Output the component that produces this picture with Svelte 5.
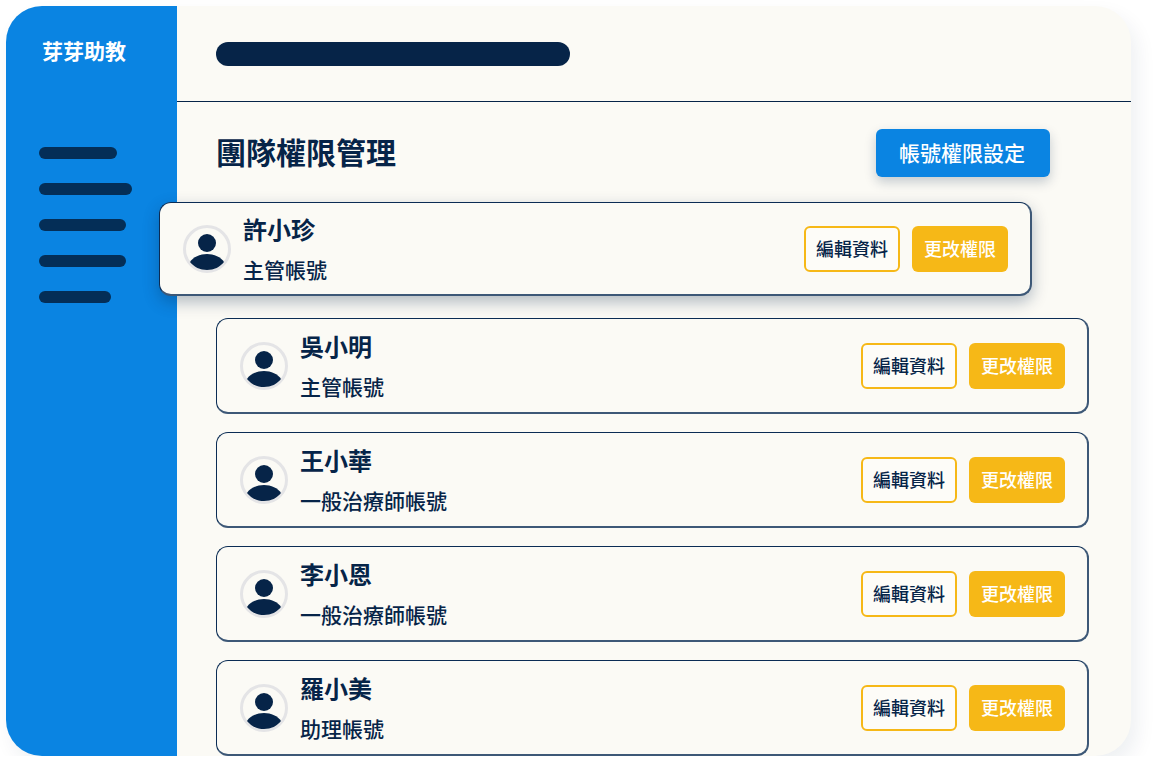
<script>
  const menuWidths = [78, 93, 87, 87, 72];

  const members = [
    { name: "許小珍", role: "主管帳號", featured: true },
    { name: "吳小明", role: "主管帳號" },
    { name: "王小華", role: "一般治療師帳號" },
    { name: "李小恩", role: "一般治療師帳號" },
    { name: "羅小美", role: "助理帳號" },
  ];
</script>

<div class="window">
  <aside class="sidebar">
    <div class="logo">芽芽助教</div>
    <nav class="menu">
      {#each menuWidths as w}
        <span class="menu-line" style="width: {w}px"></span>
      {/each}
    </nav>
  </aside>

  <main class="main">
    <header class="topbar">
      <span class="search-pill"></span>
    </header>

    <section class="content">
      <div class="title-row">
        <h1>團隊權限管理</h1>
        <button class="settings">帳號權限設定</button>
      </div>

      <div class="list">
        {#each members as m}
          <div class="card" class:featured={m.featured}>
            <svg class="avatar" viewBox="0 0 48 48" width="48" height="48" aria-hidden="true">
              <circle cx="24" cy="24" r="22.5" fill="#fbfaf5" stroke="#e4e4e6" stroke-width="3" />
              <circle cx="24" cy="18" r="9" fill="#062448" />
              <path d="M7 37C10 32 17 29 24 29C31 29 38 32 41 37C37 42 31 45 24 45C17 45 11 42 7 37Z" fill="#062448" />
            </svg>
            <div class="info">
              <div class="name">{m.name}</div>
              <div class="role">{m.role}</div>
            </div>
            <div class="actions">
              <button class="edit">編輯資料</button>
              <button class="change">更改權限</button>
            </div>
          </div>
        {/each}
      </div>
    </section>
  </main>
</div>

<style>
  :global(body) {
    background: #fff;
    font-family: "Noto Sans CJK TC", "Noto Sans", sans-serif;
    color: #062448;
  }
  .window {
    width: 1125px;
    height: 750px;
    margin: 6px 0 0 6px;
    display: flex;
    background: #fbfaf5;
    border-radius: 36px;
    box-shadow: 6px 10px 20px rgba(6, 36, 72, 0.07);
  }
  .sidebar {
    flex: 0 0 171px;
    background: #0a84e2;
    border-radius: 36px 0 0 36px;
    box-sizing: border-box;
    padding: 29px 0 0 36px;
  }
  .logo {
    color: #fff;
    font-size: 21px;
    font-weight: 700;
    line-height: 30px;
  }
  .menu {
    display: flex;
    flex-direction: column;
    gap: 24px;
    margin: 82px 0 0 -3px;
  }
  .menu-line {
    display: block;
    height: 12px;
    border-radius: 6px;
    background: #042e57;
  }
  .main {
    flex: 1;
    min-width: 0;
  }
  .topbar {
    height: 96px;
    box-sizing: border-box;
    padding: 36px 0 0 39px;
    border-bottom: 1px solid #062448;
  }
  .search-pill {
    display: block;
    width: 354px;
    height: 24px;
    border-radius: 12px;
    background: #062448;
  }
  .content {
    padding: 27px 42px 0 39px;
  }
  .title-row {
    display: flex;
    justify-content: space-between;
    align-items: center;
    height: 48px;
    padding-right: 39px;
  }
  h1 {
    margin: 0 0 4px;
    font-size: 30px;
    font-weight: 700;
    line-height: 44px;
  }
  .settings {
    width: 174px;
    height: 48px;
    padding: 0 2px 2px 0;
    border: none;
    border-radius: 6px;
    background: #0a84e2;
    color: #fff;
    font: 500 21px/1 "Noto Sans CJK TC", sans-serif;
    box-shadow: 0 5px 12px rgba(6, 36, 72, 0.22);
  }
  .list {
    display: flex;
    flex-direction: column;
    gap: 18px;
    margin-top: 25px;
  }
  .card {
    height: 96px;
    box-sizing: border-box;
    display: flex;
    align-items: center;
    padding: 0 22px 0 23px;
    background: #fbfaf5;
    border-style: solid;
    border-width: 1px 2px 2px 1px;
    border-color: #0b2c54 #3d5877 #3d5877 #0b2c54;
    border-radius: 12px;
  }
  .featured {
    position: relative;
    height: 94px;
    margin: 0 57px 4px -57px;
    box-shadow: 0 6px 16px rgba(6, 36, 72, 0.3);
  }
  .avatar {
    flex: none;
  }
  .info {
    margin: 0 0 3px 12px;
    flex: 1;
  }
  .name {
    font-size: 24px;
    font-weight: 700;
    line-height: 36px;
  }
  .role {
    font-size: 21px;
    font-weight: 500;
    line-height: 30px;
    margin-top: 7px;
  }
  .actions {
    display: flex;
    gap: 12px;
  }
  .actions button {
    width: 96px;
    height: 46px;
    padding: 0 0 2px;
    box-sizing: border-box;
    border-radius: 6px;
    font: 500 18px/1 "Noto Sans CJK TC", sans-serif;
  }
  .edit {
    background: #fdfcf8;
    border: 2px solid #f6b817;
    color: #062448;
  }
  .change {
    background: #f6b817;
    border: none;
    color: #fff;
  }
</style>
